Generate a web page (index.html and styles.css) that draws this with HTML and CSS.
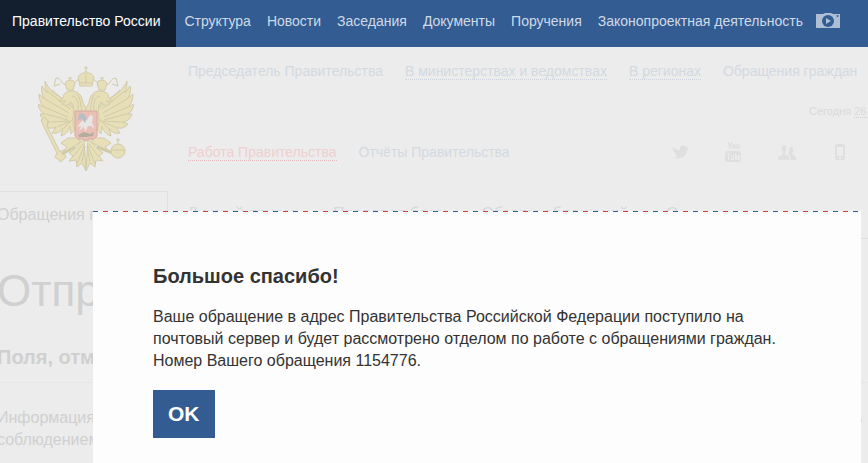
FILE: index.html
```html
<!DOCTYPE html>
<html lang="ru">
<head>
    <meta charset="UTF-8">
    <meta name="viewport" content="width=device-width, initial-scale=1.0">
    <title>Правительство России</title>
    <link rel="stylesheet" href="styles.css">
</head>
<body>
    <nav class="topbar">
        <a href="#" class="topbar-home">Правительство России</a>
        <div class="topbar-links">
            <a href="#">Структура</a>
            <a href="#">Новости</a>
            <a href="#">Заседания</a>
            <a href="#">Документы</a>
            <a href="#">Поручения</a>
            <a href="#">Законопроектная деятельность</a>
            <a href="#" class="topbar-media" aria-label="Фото и видео">
                <svg width="24" height="16" viewBox="0 0 24 16">
                    <path fill="#adbed5" d="M0 1h7l2-1h6l2 1h7v14H0z"/>
                    <circle cx="12" cy="8" r="6" fill="#325c92"/>
                    <path fill="#adbed5" d="M10 5l5 3-5 3z"/>
                    <circle cx="21.500" cy="3" r="1" fill="#325c92"/>
                </svg>
            </a>
        </div>
    </nav>

    <div class="page">
        <header class="header">
            <a href="#" class="emblem" aria-label="Герб России">
                <svg width="96" height="106" viewBox="0 0 96 106">
                    <g fill="#e6dfb8" stroke="#d2cba8" stroke-width="1" stroke-linejoin="round">
                        <!-- wings -->
                        <g id="wing">
                            <path d="M39 45C35 38 29 35 22 31C15 27 10 22 7 15C7 21 8 24 9 27L4 20C3 26 4 29 7 33L1 28C1 34 3 38 6 41L0 38C1 44 4 47 7 48L2 48C4 54 8 56 12 56L6 58C10 63 15 63 18 61L14 67C19 68 23 66 25 62L23 70C29 68 31 64 32 60L33 68L38 62Z"/>
                            <path fill="none" d="M9 25L32 43M7 33L31 47M6 41L30 51M8 48L30 54M13 56L31 55M19 61L33 55M26 62L35 53M14 24L35 42"/>
                        </g>
                        <use href="#wing" transform="matrix(-1 0 0 1 96 0)"/>
                        <!-- body, necks and heads -->
                        <g id="head">
                            <path d="M48 73C40 70 34 63 35 52C36 43 36 39 33 36C30 40 27 40 24 38L28 35L21 35L26 31C24 29 28 25 34 25C41 25 44 30 45 37L48 42Z"/>
                            <path fill="none" d="M34 30C39 31 41 36 40 44M39 28C43 32 42 38 44 45"/>
                            <path d="M29 24L27 17Q29 14 32 14Q36 14 37 17L35 24ZM32 14V11M30 12H34"/>
                            <path fill="none" d="M28 19C22 17 24 12 18 12L16 20L22 18M36 17L42 12"/>
                            <path d="M37 72L30 72L23 77L29 81L25 85L32 84L37 79L42 77L42 70Z"/>
                            <path d="M46 73C42 76 38 82 31 87L35 90L31 95L38 94L39 101L44 97L48 105Z"/>
                            <path fill="none" d="M45 78L35 91M46 80L39 98M47 80L44 96"/>
                        </g>
                        <use href="#head" transform="matrix(-1 0 0 1 96 0)"/>
                        <!-- main crown -->
                        <path d="M42 20L40 11C43 6 46 8 48 5C50 8 53 6 56 11L54 20ZM48 5V0M46 2H50M42 17H54M48 7V17"/>
                        <!-- sceptre and orb -->
                        <path d="M3 54L7 51L10 55L9 60L22 86L25 84L28 91L23 96L17 91L19 87L6 61Z"/>
                        <path fill="none" stroke-width="3" d="M24 88L37 81M59 81L75 87"/>
                        <circle cx="80" cy="85" r="7"/>
                        <path d="M73 84H87M80 78V72M78 74H82"/>
                    </g>
                    <!-- shield -->
                    <path fill="#e9bfb6" stroke="#d6aaa2" d="M37 45H59V70L56 73H51L48 75L45 73H40L37 70Z"/>
                    <path fill="#e6e6e6" d="M42 57L46 53L49 54L52 49L55 50L54 57L57 63L53 60L50 60L47 66L46 61L41 65L43 60L39 61Z"/>
                    <path fill="#b9bdc4" d="M41 48L45 47L49 52L47 57L44 53L40 54Z"/>
                    <path fill="#b5aca0" d="M40 69L46 66L52 68L56 66L55 70L48 71L41 71Z"/>
                </svg>
            </a>
            <div class="header-main">
                <nav class="menu">
                    <a href="#">Председатель Правительства</a>
                    <a href="#" class="dotted">В министерствах и ведомствах</a>
                    <a href="#" class="dotted">В регионах</a>
                    <a href="#">Обращения граждан</a>
                </nav>
                <p class="today">Сегодня <a href="#">26 августа</a></p>
                <div class="menu-row">
                    <nav class="menu">
                        <a href="#" class="dotted active">Работа Правительства</a>
                        <a href="#">Отчёты Правительства</a>
                    </nav>
                    <div class="social">
                        <a href="#" aria-label="Twitter">
                            <svg width="18" height="20" viewBox="0 0 18 20">
                                <path fill="#dfdfdf" d="M1 5C3 7 5 8 8 8C7 4 11 2 14 5L16 4L15 6L17 6L15 8C15 14 8 19 1 15C3 15 5 15 6 14C4 14 3 13 3 11H4C2 10 1 9 1 8L2 8C1 7 0 6 1 5Z"/>
                            </svg>
                        </a>
                        <a href="#" aria-label="YouTube">
                            <svg width="18" height="20" viewBox="0 0 18 20">
                                <path fill="none" stroke="#dfdfdf" stroke-width="1.500" d="M3 0L5 4L7 0M5 4V7M8 3H10V6H8ZM12 2V6H14V2"/>
                                <rect x="0" y="9" width="16" height="11" rx="3" fill="#dfdfdf"/>
                                <path fill="none" stroke="#ececec" d="M2 11.500H5M3.500 11V18M6.500 13V17.500H8.500V13M10.500 11V17.500H12V14H10.500M15 17.500H13.500V14H15V16H13.500"/>
                            </svg>
                        </a>
                        <a href="#" aria-label="Социальные сети">
                            <svg width="18" height="20" viewBox="0 0 18 20">
                                <path fill="#dfdfdf" d="M12 5C14 4 16 6 15 9L14 12L18 15V18H13L12 14L10 12L11 10Z"/>
                                <path fill="#dfdfdf" stroke="#ececec" stroke-width=".5" d="M6 3C9 3 9 6 8 9L7 12L12 15V18H0V15L5 12L4 9C3 6 3 3 6 3Z"/>
                            </svg>
                        </a>
                        <a href="#" aria-label="Мобильная версия">
                            <svg width="18" height="20" viewBox="0 0 18 20">
                                <path fill="#dfdfdf" fill-rule="evenodd" d="M6 2H12Q14 2 14 4V16Q14 18 12 18H6Q4 18 4 16V4Q4 2 6 2ZM6 5V14H12V5ZM8 15V17H10V15Z"/>
                            </svg>
                        </a>
                    </div>
                </div>
            </div>
        </header>

        <nav class="tabs">
            <a href="#" class="tab-current">Обращения граждан</a>
            <div class="tabs-rest">
                <a href="#">Личный прием</a>
                <a href="#">Правовая база</a>
                <a href="#">Обзоры обращений</a>
                <a href="#">О</a>
            </div>
        </nav>

        <main class="content">
            <h1>Отправить письмо</h1>
            <h2>Поля, отмеченные звёздочкой</h2>
            <div class="notice">
                <p>Информация о персональных данных авторов обращений хранится в системе, гарантируется конфиденциальность соблюдением требований российского законодательства о персональных данных.</p>
            </div>
        </main>
    </div>

    <div class="modal" role="dialog" aria-labelledby="modal-title">
        <h2 id="modal-title">Большое спасибо!</h2>
        <p>Ваше обращение в адрес Правительства Российской Федерации поступило на почтовый сервер и будет рассмотрено отделом по работе с обращениями граждан. Номер Вашего обращения 1154776.</p>
        <button type="button">OK</button>
    </div>
</body>
</html>
```
FILE: styles.css
```css
* {
    box-sizing: border-box;
}

body {
    margin: 0;
    position: relative;
    height: 100vh;
    overflow: hidden;
    background: #ececec;
    font-family: "Liberation Sans", Arial, sans-serif;
    font-size: 16px;
    line-height: 22px;
}

a {
    color: inherit;
    text-decoration: none;
}

h1, h2, p {
    margin: 0;
}

/* top bar */
.topbar {
    display: flex;
    background: #325c92;
    color: #d0dae6;
    font-size: 14px;
    line-height: 20px;
    white-space: nowrap;
}

.topbar-home {
    padding: 11px 16px 16px 12px;
    background: #131e2e;
    color: #fff;
}

.topbar-links {
    display: flex;
    gap: 16px;
    padding: 11px 8px 16px;
}

.topbar-media {
    display: flex;
    align-items: center;
    margin-left: -3px;
}

/* header */
.header {
    display: flex;
    padding-top: 14px;
    color: #d3d9e1;
    font-size: 14px;
    line-height: 20px;
}

.emblem {
    flex: none;
    width: 188px;
    padding: 5px 0 0 38px;
}

.header-main {
    flex: 1;
    min-width: 0;
}

.menu {
    display: flex;
    gap: 22px;
    white-space: nowrap;
}

.dotted {
    height: 19px;
    border-bottom: 1px dotted #ccd3dc;
}

.active {
    color: #efcfcf;
    border-color: #e8b9b9;
}

.today {
    margin-top: 20px;
    padding-left: 621px;
    color: #d9d9d9;
    font-size: 11px;
    white-space: nowrap;
}

.today a {
    border-bottom: 1px dotted #ccc;
}

.menu-row {
    display: flex;
    justify-content: space-between;
    margin-top: 21px;
    padding-right: 19px;
}

.social {
    display: flex;
    gap: 35px;
}

.social svg {
    display: block;
}

/* section tabs */
.tabs {
    display: flex;
    margin-top: 14px;
    white-space: nowrap;
}

.tab-current {
    flex: none;
    width: 171px;
    height: 48px;
    margin-left: -3px;
    padding-top: 12px;
    border: 1px solid #e0e0e0;
    border-width: 1px 1px 0 0;
    color: #d0d0d0;
    overflow: hidden;
}

.tabs-rest {
    flex: 1;
    display: flex;
    gap: 38px;
    padding: 12px 0 0 19px;
    border-bottom: 1px solid #e0e0e0;
    color: #d3d9e1;
}

/* page text */
.content {
    color: #d0d0d0;
}

.content h1 {
    margin: 25px 0 0 -3px;
    font-size: 44px;
    font-weight: normal;
    line-height: 54px;
}

.content h2 {
    margin: 27px 0 0 -3px;
    font-size: 20px;
    line-height: 24px;
}

.notice {
    margin-top: 13px;
    padding-top: 24px;
    border-top: 1px solid #e6e6e6;
}

.notice p {
    margin-left: -3px;
}

/* dialog */
.modal {
    position: absolute;
    top: 211px;
    bottom: 0;
    left: 93px;
    right: 7px;
    padding: 53px 60px 0;
    background: #fdfdfd repeating-linear-gradient(90deg, #325c92 0 5px, #fdfdfd 5px 10px, #d03c3c 10px 15px, #fdfdfd 15px 20px) 0 0 / 100% 1px no-repeat;
    color: #333;
}

.modal h2 {
    margin-bottom: 18px;
    font-size: 20px;
    line-height: 24px;
}

.modal button {
    display: block;
    margin-top: 18px;
    padding: 12px 15px;
    border: 0;
    background: #325c92;
    color: #fff;
    font: bold 21px/24px "Liberation Sans", Arial, sans-serif;
    cursor: pointer;
}
```
